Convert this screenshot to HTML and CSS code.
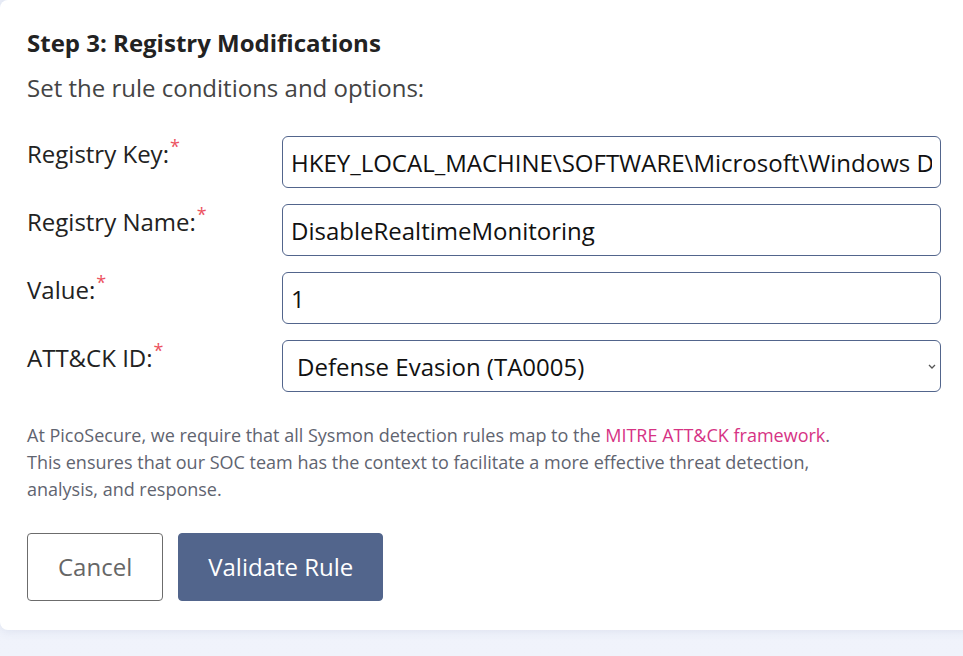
FILE: index.html
```html
<!DOCTYPE html>
<html lang="en">
<head>
<meta charset="utf-8">
<title>Step 3: Registry Modifications</title>
<link rel="stylesheet" href="styles.css">
</head>
<body>
<div class="card">
  <h2 class="title">Step 3: Registry Modifications</h2>
  <p class="subtitle">Set the rule conditions and options:</p>
  <form class="form">
    <div class="row">
      <label class="label">Registry Key:<sup class="req">*</sup></label>
      <input class="field" type="text" value="HKEY_LOCAL_MACHINE\SOFTWARE\Microsoft\Windows Defender">
    </div>
    <div class="row">
      <label class="label">Registry Name:<sup class="req">*</sup></label>
      <input class="field" type="text" value="DisableRealtimeMonitoring">
    </div>
    <div class="row">
      <label class="label">Value:<sup class="req">*</sup></label>
      <input class="field" type="text" value="1">
    </div>
    <div class="row">
      <label class="label">ATT&amp;CK ID:<sup class="req">*</sup></label>
      <div class="select-wrap">
        <select class="field select">
          <option>Defense Evasion (TA0005)</option>
        </select>
        <svg class="chev" width="8" height="5" viewBox="0 0 8 5"><path d="M1 1l3 3 3-3" fill="none" stroke="#555" stroke-width="1.3"/></svg>
      </div>
    </div>
  </form>
  <p class="note">At PicoSecure, we require that all Sysmon detection rules map to the <a class="link" href="#">MITRE ATT&amp;CK framework</a>.<br>This ensures that our SOC team has the context to facilitate a more effective threat detection,<br>analysis, and response.</p>
  <div class="actions">
    <button class="btn btn-cancel" type="button">Cancel</button>
    <button class="btn btn-primary" type="button">Validate Rule</button>
  </div>
</div>
</body>
</html>
```

FILE: styles.css
```css
html, body {
  margin: 0;
  padding: 0;
  overflow: hidden;
}
body {
  background: linear-gradient(180deg, #e9edf7 0%, #f0f3fb 100%);
  font-family: "Open Sans", "Noto Sans", sans-serif;
  color: #212529;
  height: 656px;
}
.card {
  background: #fff;
  border-radius: 8px;
  margin-right: -20px;
  padding: 25px 42px 29px 27px;
  box-shadow: 0 2px 10px rgba(80, 100, 150, 0.10);
}
.title {
  margin: 0 0 9px;
  font-size: 24px;
  line-height: 36px;
  font-weight: 700;
  color: #222;
}
.subtitle {
  margin: 0 0 30px;
  font-size: 24px;
  line-height: 36px;
  color: #444;
}
.form {
  display: flex;
  flex-direction: column;
  gap: 16px;
}
.row {
  display: flex;
  align-items: flex-start;
}
.label {
  width: 255px;
  flex: none;
  font-size: 24px;
  line-height: 36px;
  color: #222;
}
.req {
  color: #ec5260;
  font-size: 18px;
  line-height: 0;
  vertical-align: 10px;
  margin-left: 1px;
}
.field {
  flex: 1;
  min-width: 0;
  box-sizing: border-box;
  height: 52px;
  border: 1px solid #52658c;
  border-radius: 6px;
  padding: 7px 8px;
  font-family: "Open Sans", "Noto Sans", sans-serif;
  font-size: 24px;
  line-height: 36px;
  color: #111;
  background: #fff;
  outline: none;
}
.select-wrap {
  flex: 1;
  display: flex;
  position: relative;
}
.select {
  width: 100%;
  -webkit-appearance: none;
  appearance: none;
  padding: 8px 30px 6px 14px;
}
.chev {
  position: absolute;
  right: 5px;
  top: 24px;
  pointer-events: none;
}
.note {
  margin: 30px 0 30px;
  font-size: 18px;
  line-height: 27px;
  color: #5f6470;
}
.link {
  color: #d63384;
  text-decoration: none;
}
.actions {
  display: flex;
  gap: 15px;
}
.btn {
  font-family: "Open Sans", "Noto Sans", sans-serif;
  font-size: 24px;
  line-height: 36px;
  padding: 15px 30px;
  border-radius: 4px;
  cursor: pointer;
}
.btn-cancel {
  background: #fff;
  border: 1px solid #6c6c6c;
  color: #666;
}
.btn-primary {
  background: #52658c;
  border: 1px solid #52658c;
  color: #fff;
  padding: 15px 29px;
}
```
